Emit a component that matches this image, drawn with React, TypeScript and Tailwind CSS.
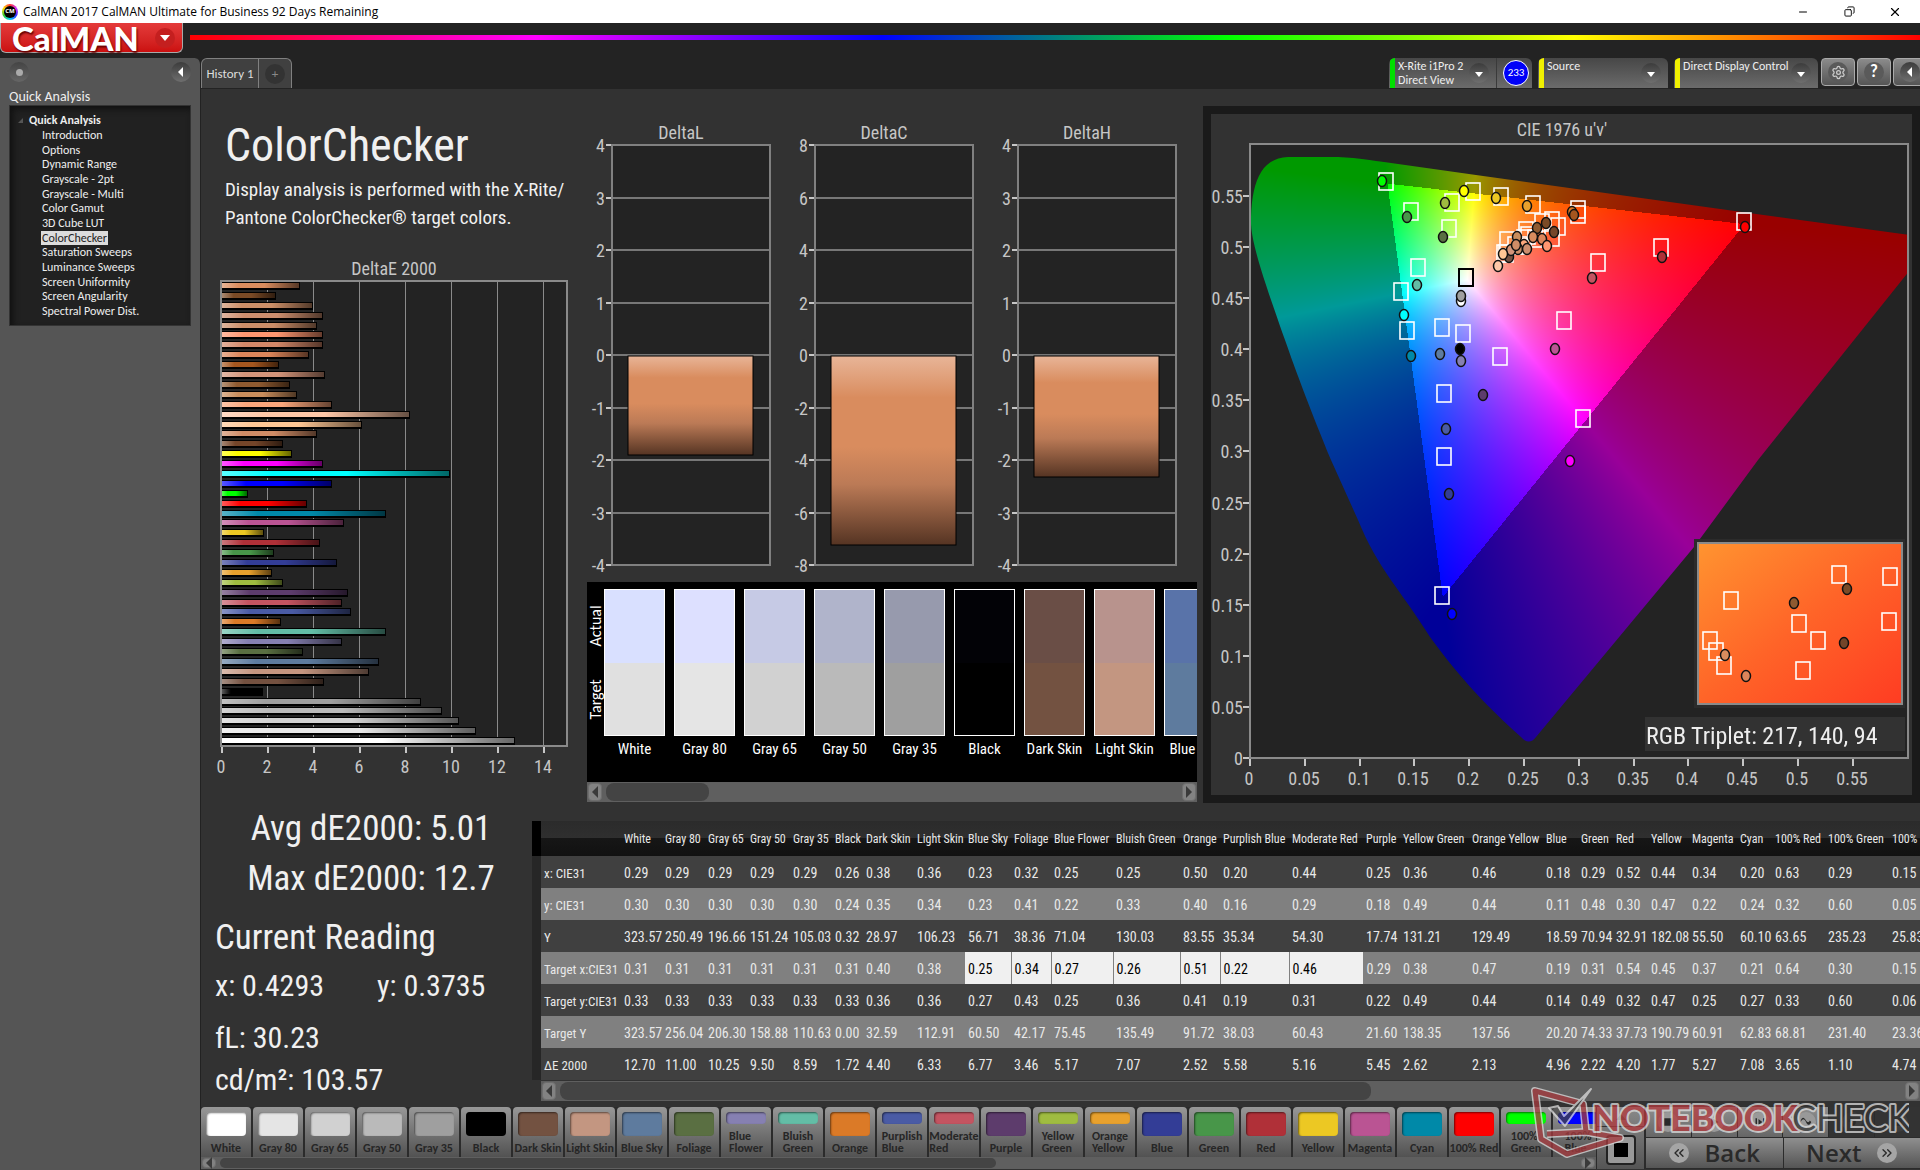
import { useEffect, useRef } from 'react';
import { Minus, X, Copy, ChevronsLeft, ChevronsRight, Settings } from 'lucide-react';

const COND = 'font-["Roboto_Condensed","Carlito","Liberation_Sans",sans-serif]';
const TEXT = 'font-["Carlito","Lato","Liberation_Sans",sans-serif]';

const treeItems = [
  'Introduction', 'Options', 'Dynamic Range', 'Grayscale - 2pt', 'Grayscale - Multi', 'Color Gamut', '3D Cube LUT',
  'ColorChecker', 'Saturation Sweeps', 'Luminance Sweeps', 'Screen Uniformity', 'Screen Angularity', 'Spectral Power Dist.',
];

// DeltaE 2000 per patch, listed top to bottom
const deltaE: [number, string][] = [
  [3.35, '#d98c5e'], [2.3, '#7a4a26'], [3.9, '#cc8f68'], [4.35, '#cd8e6e'], [4.1, '#cb8d68'], [4.35, '#ff9670'],
  [4.35, '#d38768'], [3.75, '#dc855a'], [2.45, '#a5561f'], [4.45, '#d4957a'], [2.9, '#8f5a30'], [3.2, '#c98d5c'],
  [4.75, '#fba77c'], [8.15, '#ffc8a8'], [6.05, '#ffc795'], [4.1, '#d08c66'], [2.6, '#744529'], [3.0, '#ffff00'],
  [4.35, '#ff00ff'], [9.85, '#00ffff'], [4.74, '#0000ff'], [1.1, '#00ff00'], [3.65, '#ff0000'], [7.08, '#0089a8'],
  [5.27, '#ba5493'], [1.77, '#ecc823'], [4.2, '#b03038'], [2.22, '#489649'], [4.96, '#333d96'], [2.13, '#e8a12d'],
  [2.62, '#9fbc40'], [5.45, '#5d3c6c'], [5.16, '#c45461'], [5.58, '#4a5ba5'], [2.52, '#db7a27'], [7.07, '#63bda6'],
  [5.17, '#8680b2'], [3.46, '#5a6f42'], [6.77, '#5e7c9f'], [6.33, '#c59680'], [4.4, '#745140'], [1.72, '#000000'],
  [8.59, '#9f9f9f'], [9.5, '#bababa'], [10.25, '#d2d2d2'], [11.0, '#e8e8e8'], [12.7, '#ffffff'],
];

const swatches = [
  { name: 'White', actual: '#d9e0ff', target: '#e0e0e0' },
  { name: 'Gray 80', actual: '#dde0ff', target: '#e5e5e5' },
  { name: 'Gray 65', actual: '#c6cae5', target: '#d1d1d1' },
  { name: 'Gray 50', actual: '#b0b4cb', target: '#bababa' },
  { name: 'Gray 35', actual: '#979aad', target: '#9f9f9f' },
  { name: 'Black', actual: '#020206', target: '#000000' },
  { name: 'Dark Skin', actual: '#6a4e46', target: '#735241' },
  { name: 'Light Skin', actual: '#b8938d', target: '#c39681' },
  { name: 'Blue Sky', actual: '#5973a9', target: '#5e7b9e' },
];

const columns: [string, number, string[]][] = [
  ['White', 41, ['0.29', '0.30', '323.57', '0.31', '0.33', '323.57', '12.70']],
  ['Gray 80', 43, ['0.29', '0.30', '250.49', '0.31', '0.33', '256.04', '11.00']],
  ['Gray 65', 42, ['0.29', '0.30', '196.66', '0.31', '0.33', '206.30', '10.25']],
  ['Gray 50', 43, ['0.29', '0.30', '151.24', '0.31', '0.33', '158.88', '9.50']],
  ['Gray 35', 42, ['0.29', '0.30', '105.03', '0.31', '0.33', '110.63', '8.59']],
  ['Black', 31, ['0.26', '0.24', '0.32', '0.31', '0.33', '0.00', '1.72']],
  ['Dark Skin', 51, ['0.38', '0.35', '28.97', '0.40', '0.36', '32.59', '4.40']],
  ['Light Skin', 51, ['0.36', '0.34', '106.23', '0.38', '0.36', '112.91', '6.33']],
  ['Blue Sky', 46, ['0.23', '0.23', '56.71', '0.25', '0.27', '60.50', '6.77']],
  ['Foliage', 40, ['0.32', '0.41', '38.36', '0.34', '0.43', '42.17', '3.46']],
  ['Blue Flower', 62, ['0.25', '0.22', '71.04', '0.27', '0.25', '75.45', '5.17']],
  ['Bluish Green', 67, ['0.25', '0.33', '130.03', '0.26', '0.36', '135.49', '7.07']],
  ['Orange', 40, ['0.50', '0.40', '83.55', '0.51', '0.41', '91.72', '2.52']],
  ['Purplish Blue', 69, ['0.20', '0.16', '35.34', '0.22', '0.19', '38.03', '5.58']],
  ['Moderate Red', 74, ['0.44', '0.29', '54.30', '0.46', '0.31', '60.43', '5.16']],
  ['Purple', 37, ['0.25', '0.18', '17.74', '0.29', '0.22', '21.60', '5.45']],
  ['Yellow Green', 69, ['0.36', '0.49', '131.21', '0.38', '0.49', '138.35', '2.62']],
  ['Orange Yellow', 74, ['0.46', '0.44', '129.49', '0.47', '0.44', '137.56', '2.13']],
  ['Blue', 35, ['0.18', '0.11', '18.59', '0.19', '0.14', '20.20', '4.96']],
  ['Green', 35, ['0.29', '0.48', '70.94', '0.31', '0.49', '74.33', '2.22']],
  ['Red', 35, ['0.52', '0.30', '32.91', '0.54', '0.32', '37.73', '4.20']],
  ['Yellow', 41, ['0.44', '0.47', '182.08', '0.45', '0.47', '190.79', '1.77']],
  ['Magenta', 48, ['0.34', '0.22', '55.50', '0.37', '0.25', '60.91', '5.27']],
  ['Cyan', 35, ['0.20', '0.24', '60.10', '0.21', '0.27', '62.83', '7.08']],
  ['100% Red', 53, ['0.63', '0.32', '63.65', '0.64', '0.33', '68.81', '3.65']],
  ['100% Green', 64, ['0.29', '0.60', '235.23', '0.30', '0.60', '231.40', '1.10']],
  ['100% Blue', 58, ['0.15', '0.05', '25.83', '0.15', '0.06', '23.36', '4.74']],
];
const rowLabels = ['x: CIE31', 'y: CIE31', 'Y', 'Target x:CIE31', 'Target y:CIE31', 'Target Y', 'ΔE 2000'];

const patches: [string, string][] = [
  ['White', '#ffffff'], ['Gray 80', '#e5e5e5'], ['Gray 65', '#d1d1d1'], ['Gray 50', '#bababa'], ['Gray 35', '#9f9f9f'],
  ['Black', '#000000'], ['Dark Skin', '#735241'], ['Light Skin', '#c39681'], ['Blue Sky', '#5e7b9e'], ['Foliage', '#5a6f42'],
  ['Blue\nFlower', '#8680b2'], ['Bluish\nGreen', '#63bda6'], ['Orange', '#db7a27'], ['Purplish\nBlue', '#4a5ba5'],
  ['Moderate\nRed', '#c45461'], ['Purple', '#5d3c6c'], ['Yellow\nGreen', '#9fbc40'], ['Orange\nYellow', '#e8a12d'],
  ['Blue', '#333d96'], ['Green', '#489649'], ['Red', '#b03038'], ['Yellow', '#ecc823'], ['Magenta', '#ba5493'],
  ['Cyan', '#0089a8'], ['100% Red', '#ff0000'], ['100%\nGreen', '#00ff00'], ['100%\nBlue', '#0000ff'],
];

// Target marker centres on the u'v' plane, in panel pixels
const targets: [number, number][] = [
  [175, 67], [262, 77], [290, 82], [241, 88], [322, 90], [200, 97], [238, 114], [367, 95], [367, 100], [533, 107],
  [450, 133], [387, 148], [207, 153], [190, 177], [196, 216], [231, 213], [252, 219], [353, 206], [289, 242],
  [233, 279], [372, 304], [233, 342], [231, 481], [347, 112], [341, 106], [331, 108], [315, 116], [296, 126],
  [341, 123], [324, 124], [317, 121], [313, 124], [309, 131], [304, 131], [293, 139], [295, 139],
];
const readings: [number, number, string][] = [
  [171, 67, '#00ff00'], [253, 77, '#ffff00'], [285, 84, '#ecc823'], [234, 89, '#9fbc40'], [316, 92, '#e8a12d'],
  [196, 103, '#489649'], [232, 123, '#5a6f42'], [361, 98, '#db7a27'], [363, 101, '#a5561f'], [335, 109, '#7a4a26'],
  [326, 114, '#8f5a30'], [343, 118, '#744529'], [313, 131, '#fba77c'], [306, 123, '#c98d5c'], [322, 123, '#d98c5e'],
  [331, 125, '#dc855a'], [336, 132, '#ff9670'], [307, 135, '#cc8f68'], [316, 135, '#cd8e6e'], [298, 143, '#745140'],
  [300, 136, '#d4957a'], [305, 131, '#d08c66'], [292, 140, '#ffc795'], [287, 152, '#ffc8a8'], [534, 113, '#ff0000'],
  [451, 143, '#b03038'], [381, 164, '#c45461'], [206, 171, '#63bda6'], [250, 187, '#ffffff'], [250, 182, '#9f9f9f'],
  [193, 201, '#00ffff'], [200, 242, '#0089a8'], [229, 240, '#5e7c9f'], [249, 235, '#000000'], [250, 247, '#8680b2'],
  [344, 235, '#ba5493'], [272, 281, '#5d3c6c'], [235, 315, '#4a5ba5'], [359, 347, '#ff00ff'], [238, 380, '#333d96'],
  [241, 500, '#0000ff'],
];
const insetTargets: [number, number][] = [
  [628, 460], [679, 462], [520, 486], [588, 509], [678, 507], [499, 526], [607, 526], [505, 537], [513, 551], [592, 556],
];
const insetReadings: [number, number, string][] = [
  [636, 475, '#7a4a26'], [583, 489, '#8f5a30'], [633, 529, '#744529'], [514, 541, '#d98c5e'], [535, 562, '#dc855a'],
];

const LOCUS =
  'M1 80 C1 40 10 14 38 13 L88 13 C110 14 125 17 134 18 L226 31 L499 69 L660 91 L660 126 L508 316 L444 403 L286 593 Q279 602 271 593 C240 565 212 537 180 493 C150 445 128 425 108 376 L81 316 C62 270 45 225 35 196 C22 158 2 105 1 80 Z';

function ArrowCap({ dir }: { dir: 'left' | 'right' }) {
  return (
    <button aria-label={`Scroll ${dir}`} className="w-[14px] shrink-0 rounded-sm border border-[#6e6e6e] bg-[#828282] flex items-center justify-center">
      <svg width="6" height="12" viewBox="0 0 6 12">
        <path d={dir === 'left' ? 'M6 0V12L0 6Z' : 'M0 0V12L6 6Z'} fill="#3a3a3a" />
      </svg>
    </button>
  );
}

function RoundArrow({ dir = 'down' }: { dir?: 'down' | 'left' }) {
  return (
    <span className="w-5 h-5 shrink-0 rounded-full bg-linear-to-b from-[#3c3c3c] to-[#6f6f6f] flex items-center justify-center">
      <svg width="10" height="10" viewBox="0 0 10 10">
        <path d={dir === 'down' ? 'M1 4H9L5 9Z' : 'M7 0V10L2 5Z'} fill="#fff" />
      </svg>
    </span>
  );
}

function TitleBar() {
  return (
    <div className="h-[23px] bg-white text-black flex items-center pl-[2px] font-['Open_Sans','Noto_Sans',sans-serif] text-[12px]">
      <span className="w-4 h-4 rounded-full bg-[conic-gradient(#f33,#c3f,#33f,#0cf,#3c3,#fd0,#f33)] p-[2px]">
        <span className="w-full h-full rounded-full bg-black text-white text-[6px] font-bold flex items-center justify-center">CM</span>
      </span>
      <span className="ml-[5px] grow">CalMAN 2017 CalMAN Ultimate for Business 92 Days Remaining</span>
      <button aria-label="Minimize" className="w-[46px] flex justify-center"><Minus size={12} strokeWidth={2} /></button>
      <button aria-label="Restore" className="w-[46px] flex justify-center"><Copy size={11} strokeWidth={2} className="-scale-x-100" /></button>
      <button aria-label="Close" className="w-[46px] flex justify-center mr-[2px]"><X size={14} strokeWidth={2} /></button>
    </div>
  );
}

function Header() {
  return (
    <header className="h-[35px] flex items-start bg-[#232323]">
      <button className="w-[183px] h-[30px] shrink-0 rounded-b-md border border-t-0 border-[#a9a9a9] bg-linear-to-b from-[#e43a3a] to-[#cb0f0f] flex items-center justify-between pl-[11px] pr-[7px]">
        <span className="font-['Lato',sans-serif] text-[33px] leading-[28px] font-black text-white [text-shadow:1px_2px_2px_#600]">CalMAN</span>
        <span className="w-5 h-5 rounded-full bg-[#c41f1f] flex items-center justify-center">
          <svg width="10" height="6" viewBox="0 0 10 6"><path d="M0 0H10L5 6Z" fill="#fff" /></svg>
        </span>
      </button>
      <div className="grow h-[5px] mt-3 ml-[7px] bg-[linear-gradient(to_right,#f00,#f0f,#00f,#0f0,#ff0,#f00)]" />
    </header>
  );
}

function Sidebar() {
  return (
    <aside className={`w-[201px] shrink-0 bg-[#555555] border-r border-[#222] rounded-tr-md px-[9px] ${TEXT} text-[#eee]`}>
      <div className="flex justify-between pt-1">
        <span className="w-5 h-5 rounded-full bg-linear-to-b from-[#444] to-[#666] flex items-center justify-center">
          <span className="w-[7px] h-[7px] rounded-full bg-[#aaa]" />
        </span>
        <button aria-label="Collapse sidebar"><RoundArrow dir="left" /></button>
      </div>
      <h2 className="mt-[7px] text-[14px] leading-4">Quick Analysis</h2>
      <nav className="h-[221px] bg-[#212121] border border-[#333] shadow-[inset_3px_3px_6px_#111] pt-[6px] text-[12px]">
        <div className="flex items-center font-bold text-[12px] leading-[16px] pl-2">
          <svg width="5" height="5" viewBox="0 0 5 5" className="mr-[6px]"><path d="M5 0V5H0Z" fill="#555" /></svg>
          Quick Analysis
        </div>
        <ul className="h-[190px] pl-[31px] flex flex-col justify-between">
          {treeItems.map((item) => (
            <li key={item} className="h-[14px] flex">
              <a
                href="#"
                className={item === 'ColorChecker' ? 'px-px leading-[14px] bg-[#dcdcdc] text-[#222]' : 'px-px leading-[14px]'}
              >
                {item}
              </a>
            </li>
          ))}
        </ul>
      </nav>
    </aside>
  );
}

function DeviceBox({ lines, stripe, children, width }: { lines: string[]; stripe: string; children?: React.ReactNode; width: string }) {
  return (
    <div className={`${width} h-[30px] rounded-t-md bg-linear-to-b from-[#474747] to-[#6b6b6b] flex overflow-hidden`}>
      <span className={`w-[5px] ml-px shrink-0 ${stripe}`} />
      <button className="grow flex items-center justify-between pl-[3px] pr-[7px] text-left text-[12px] leading-[14px] text-[#eee]">
        <span className="self-start pt-px whitespace-nowrap">
          {lines.map((l) => <span key={l} className="block">{l}</span>)}
        </span>
        <RoundArrow />
      </button>
      {children}
    </div>
  );
}

function TabBar() {
  const square = 'h-[28px] w-[34px] shrink-0 rounded border border-[#aaa] bg-linear-to-b from-[#8b8b8b] to-[#555] flex items-center justify-center';
  return (
    <div className={`h-[31px] bg-[#232323] flex items-start overflow-hidden ${TEXT}`}>
      <div className="h-[30px] flex rounded-t-md border border-b-0 border-[#808080] bg-[#404040]">
        <button className="w-[57px] text-[13px] text-[#ddd] border-r border-[#808080]">History 1</button>
        <button aria-label="Add tab" className="w-[32px] flex items-center justify-center">
          <span className="w-5 h-5 rounded-full bg-[#333] text-[#888] text-[13px] leading-[20px]">+</span>
        </button>
      </div>
      <div className="ml-auto flex gap-[6px]">
        <DeviceBox width="w-[143px]" stripe="bg-[#00e000]" lines={['X-Rite i1Pro 2', 'Direct View']}>
          <span className="w-[36px] shrink-0 border-l border-[#3a3a3a] flex items-center justify-end pr-[3px]">
            <span className="w-[26px] h-[26px] rounded-full border border-white bg-[#0000f8] text-white text-[11px] flex items-center justify-center">233</span>
          </span>
        </DeviceBox>
        <DeviceBox width="w-[130px]" stripe="bg-[#f0f000]" lines={['Source']} />
        <DeviceBox width="w-[144px]" stripe="bg-[#f0f000]" lines={['Direct Display Control']} />
      </div>
      <div className="flex gap-[2px] ml-[3px] -mr-[7px]">
        <button aria-label="Settings" className={square}>
          <span className="w-5 h-5 rounded-full bg-[#5a5a5a] flex items-center justify-center"><Settings size={15} color="#ccc" /></span>
        </button>
        <button aria-label="Help" className={square}>
          <span className="w-5 h-5 rounded-full bg-[#5a5a5a] text-white text-[17px] leading-[20px] font-bold">?</span>
        </button>
        <button aria-label="Collapse" className={square}><RoundArrow dir="left" /></button>
      </div>
    </div>
  );
}

function DeltaEChart() {
  const pitch = 465 / deltaE.length;
  return (
    <svg width="386" height="525" className={COND} role="img" aria-label="DeltaE 2000">
      <defs>
        <linearGradient id="gloss">
          <stop offset="0" stopColor="#fff" stopOpacity="0.35" />
          <stop offset="0.22" stopColor="#fff" stopOpacity="0" />
          <stop offset="0.55" stopColor="#000" stopOpacity="0" />
          <stop offset="1" stopColor="#000" stopOpacity="0.6" />
        </linearGradient>
      </defs>
      <text x="193" y="20" fontSize="18" fill="#c6c6c6" textAnchor="middle">DeltaE 2000</text>
      <rect x="21" y="26" width="345" height="465" fill="#232323" />
      {[0, 2, 4, 6, 8, 10, 12, 14].map((v) => (
        <g key={v}>
          <rect x={20 + v * 23} y="26" width="1" height="465" fill="#8a8a8a" />
          <rect x={20 + v * 23} y="491" width="2" height="7" fill="#c6c6c6" />
          <text x={20 + v * 23} y="518" fontSize="18" fill="#c6c6c6" textAnchor="middle">{v}</text>
        </g>
      ))}
      {deltaE.map(([value, color], i) => (
        <g key={i}>
          <rect x="21" y={Math.round(27 + i * pitch)} width={Math.round(value * 23) + 1} height="8" fill="#000" />
          <rect x="21" y={Math.round(28 + i * pitch)} width={Math.round(value * 23)} height="5" fill={color} />
          <rect x="21" y={Math.round(28 + i * pitch)} width={Math.round(value * 23)} height="5" fill="url(#gloss)" />
        </g>
      ))}
      <rect x="20" y="26" width="346" height="465" fill="none" stroke="#8a8a8a" strokeWidth="2" />
    </svg>
  );
}

function DeltaChart({ title, max, value }: { title: string; max: number; value: number }) {
  const height = Math.round((Math.abs(value) / max) * 210);
  return (
    <svg width="203" height="465" className={COND} role="img" aria-label={title}>
      <defs>
        <linearGradient id="copper" x2="0" y2="1">
          <stop offset="0" stopColor="#e8b598" />
          <stop offset="0.22" stopColor="#d98c5e" />
          <stop offset="0.48" stopColor="#d98c5e" />
          <stop offset="0.68" stopColor="#bb7a56" />
          <stop offset="1" stopColor="#553423" />
        </linearGradient>
      </defs>
      <text x="94" y="22" fontSize="18" fill="#c6c6c6" textAnchor="middle">{title}</text>
      <rect x="25" y="28" width="158" height="420" fill="#232323" />
      {[0, 1, 2, 3, 4, 5, 6, 7, 8].map((i) => {
        const y = Math.round(28 + i * 52.5);
        return (
          <g key={i}>
            <rect x="25" y={y - 1} width="158" height="2" fill="#777" />
            <rect x="19" y={y - 1} width="6" height="2" fill="#c6c6c6" />
            <text x="18" y={y + 7} fontSize="18" fill="#c6c6c6" textAnchor="end">{max - (i * max) / 4}</text>
          </g>
        );
      })}
      <rect x="25" y="28" width="158" height="420" fill="none" stroke="#808080" strokeWidth="2" />
      <rect x="41" y="239" width="125" height={height} fill="url(#copper)" stroke="#000" />
    </svg>
  );
}

function ScrollBar({ thumb, height = 'h-5' }: { thumb: string; height?: string }) {
  return (
    <div className={`${height} bg-[#5f5f5f] flex gap-1 p-px`}>
      <ArrowCap dir="left" />
      <div className="grow flex"><div className={`${thumb} rounded-lg bg-[#444]`} /></div>
      <ArrowCap dir="right" />
    </div>
  );
}

function Comparison() {
  const side = '[writing-mode:vertical-rl] rotate-180 text-center flex-1';
  return (
    <div>
      <div className={`h-[200px] bg-black text-white flex pt-[7px] overflow-hidden ${COND}`}>
        <div className={`w-[17px] h-[147px] shrink-0 flex flex-col text-[16px] leading-[17px] ${TEXT}`}>
          <span className={side}>Actual</span>
          <span className={side}>Target</span>
        </div>
        <div className="flex gap-[9px]">
          {swatches.map((s) => (
            <div key={s.name} className="w-[61px] shrink-0 text-center">
              <div className="h-[147px] border border-white flex flex-col">
                <div className="flex-1" style={{ background: s.actual }} />
                <div className="flex-1" style={{ background: s.target }} />
              </div>
              <div className="text-[15px] leading-[26px] whitespace-nowrap">{s.name}</div>
            </div>
          ))}
        </div>
      </div>
      <ScrollBar thumb="w-[103px]" />
    </div>
  );
}

// Fills the horseshoe with the brightest RGB colour of each chromaticity
function paintGamut(canvas: HTMLCanvasElement) {
  const ctx = canvas.getContext('2d');
  if (!ctx) return;
  const { width, height } = canvas;
  const image = ctx.createImageData(width, height);
  for (let py = 0; py < height; py++) {
    for (let px = 0; px < width; px++) {
      const u = px / 1096;
      const v = Math.max((height - py) / 1022, 0.001);
      const X = (9 * u) / (4 * v);
      const Z = (12 - 3 * u - 20 * v) / (4 * v);
      const rgb = [
        3.2406 * X - 1.5372 - 0.4986 * Z,
        -0.9689 * X + 1.8758 + 0.0415 * Z,
        0.0557 * X - 0.204 + 1.057 * Z,
      ];
      const dim = Math.min(...rgb) < 0 ? 0.6 : 1;
      const top = Math.max(...rgb);
      const at = (py * width + px) * 4;
      rgb.forEach((c, i) => {
        image.data[at + i] = 255 * dim * Math.pow(Math.max(c, 0) / top, 0.9);
      });
      image.data[at + 3] = 255;
    }
  }
  ctx.putImageData(image, 0, 0);
  ctx.globalCompositeOperation = 'destination-in';
  ctx.fill(new Path2D(LOCUS));
  ctx.globalCompositeOperation = 'source-over';
}

function Markers({ squares, dots }: { squares: [number, number][]; dots: [number, number, string][] }) {
  return (
    <>
      {squares.map(([x, y], i) => (
        <rect key={i} x={x - 7} y={y - 8} width="14" height="17" fill="none" stroke="#fff" strokeWidth="1.6" />
      ))}
      {dots.map(([x, y, color], i) => (
        <ellipse key={i} cx={x} cy={y} rx="4.5" ry="5.5" fill={color} stroke="#111" strokeWidth="1.5" />
      ))}
    </>
  );
}

function CieChart() {
  const canvas = useRef<HTMLCanvasElement>(null);
  useEffect(() => {
    if (canvas.current) paintGamut(canvas.current);
  }, []);
  const ticks = [0, 0.05, 0.1, 0.15, 0.2, 0.25, 0.3, 0.35, 0.4, 0.45, 0.5, 0.55];
  return (
    <div className="mt-[17px] border-8 border-[#1a1a1a] bg-[#323232] shrink-0">
      <div className="relative">
        <svg width="701" height="681" className={`block ${COND}`}>
          <rect x="39" y="30" width="658" height="614" fill="#232323" />
          <text x="351" y="22" fontSize="18" fill="#c6c6c6" textAnchor="middle">CIE 1976 u'v'</text>
          {ticks.map((t) => (
            <g key={t}>
              <rect x={Math.round(38 + t * 1096)} y="645" width="2" height="7" fill="#c6c6c6" />
              <text x={Math.round(38 + t * 1096)} y="671" fontSize="18" fill="#c6c6c6" textAnchor="middle">{t}</text>
              <rect x="32" y={Math.round(643 - t * 1022)} width="6" height="2" fill="#c6c6c6" />
              <text x="32" y={Math.round(651 - t * 1022)} fontSize="18" fill="#c6c6c6" textAnchor="end">{t}</text>
            </g>
          ))}
        </svg>
        <canvas ref={canvas} width={658} height={614} className="absolute left-[39px] top-[30px]" />
        <svg width="701" height="681" className={`absolute inset-0 ${COND}`}>
          <defs>
            <linearGradient id="zoomed" x2="1" y2="1">
              <stop offset="0" stopColor="#ff9430" />
              <stop offset="0.5" stopColor="#ff6428" />
              <stop offset="1" stopColor="#ff3c22" />
            </linearGradient>
          </defs>
          <rect x="39" y="30" width="658" height="614" fill="none" stroke="#8a8a8a" strokeWidth="2" />
          <Markers squares={targets} dots={readings} />
          <rect x="248" y="155" width="14" height="17" fill="none" stroke="#000" strokeWidth="2" />
          <rect x="483" y="425" width="211" height="169" fill="#2b2b2b" />
          <rect x="487" y="429" width="204" height="161" fill="url(#zoomed)" stroke="#8a8a8a" strokeWidth="2" />
          <Markers squares={insetTargets} dots={insetReadings} />
          <rect x="434" y="603" width="260" height="34" fill="#323232" />
          <text x="435" y="630" fontSize="24" fill="#eee">RGB Triplet: 217, 140, 94</text>
        </svg>
      </div>
    </div>
  );
}

function Stats() {
  return (
    <div className={`w-[331px] shrink-0 pt-px pl-[14px] text-[#f0f0f0] text-[30px] leading-[44px] whitespace-nowrap ${COND}`}>
      <div className="w-[312px] text-center text-[35px] leading-[50px]">
        <p>Avg dE2000: 5.01</p>
        <p>Max dE2000: 12.7</p>
      </div>
      <h2 className="mt-3 text-[35px]">Current Reading</h2>
      <p className="mt-1 flex">
        <span className="w-[162px]">x: 0.4293</span>
        <span>y: 0.3735</span>
      </p>
      <p className="mt-2">fL: 30.23</p>
      <p className="leading-[40px]">cd/m²: 103.57</p>
    </div>
  );
}

function DataTable() {
  return (
    <div className="grow min-w-0 mt-[18px] overflow-hidden">
      <table className={`table-fixed w-[1415px] border-collapse text-left text-[14px] text-[#e8e8e8] whitespace-nowrap ${COND}`}>
        <colgroup>
          <col className="w-[9px]" />
          <col className="w-[80px]" />
          {columns.map(([name, width]) => <col key={name} style={{ width }} />)}
        </colgroup>
        <thead>
          <tr className="h-[35px] text-[12px] bg-[linear-gradient(#2b2b2b,#2f2f2f_50%,#161616_50%,#111)]">
            <td className="bg-black" />
            <td />
            {columns.map(([name]) => <th key={name} scope="col" className="p-0 pl-[3px] font-normal">{name}</th>)}
          </tr>
        </thead>
        <tbody>
          {rowLabels.map((label, r) => (
            <tr key={label} className={r % 2 ? 'h-8 bg-[#808080]' : 'h-8 bg-[#404040]'}>
              <td className="bg-[#262626]" />
              <th scope="row" className="p-0 pl-[3px] pt-[3px] text-[13px] font-normal">{label}</th>
              {columns.map(([name, , values], c) => (
                <td
                  key={name}
                  className={r === 3 && c > 7 && c < 15 ? 'p-0 pl-[3px] pt-[3px] bg-[#f0f0f0] text-black border-r border-[#808080]' : 'p-0 pl-[3px] pt-[3px]'}
                >
                  {values[r]}
                </td>
              ))}
            </tr>
          ))}
        </tbody>
      </table>
      <div className="pl-[9px] mt-px"><ScrollBar thumb="w-[811px]" /></div>
    </div>
  );
}

function PatchBar() {
  return (
    <div className="grow min-w-0 overflow-hidden">
      <div className="flex gap-[2px] bg-[#2b2b2b]">
        {patches.map(([name, color]) => (
          <button
            key={name}
            className={`w-[50px] h-[50px] shrink-0 rounded-t bg-linear-to-b from-[#989898] to-[#525252] flex flex-col items-center pt-[5px] pb-[3px] font-bold text-[12px] leading-[12px] text-[#262626] ${TEXT}`}
          >
            <span
              className={name.includes('\n') ? 'w-10 h-3 rounded-sm shadow-[inset_1px_1px_2px_#0008]' : 'w-10 h-6 rounded-sm shadow-[inset_1px_1px_2px_#0008]'}
              style={{ background: color }}
            />
            <span className="mt-auto whitespace-pre text-left">{name}</span>
          </button>
        ))}
      </div>
      <ScrollBar thumb="w-[776px]" height="h-3" />
    </div>
  );
}

function Transport() {
  const media = [
    'M3 3H13V13H3Z', 'M4 2L14 8L4 14Z', 'M2 3H4V13H2ZM12 3H14V13H12ZM6 4L11 8L6 12Z',
    'M1 8C3 3 6 3 8 8C10 13 13 13 15 8L13 6C12 9 10 9 8 6C5 1 3 1 1 6Z', 'M3 8A5 5 0 1 1 8 13L8 10A2 2 0 1 0 6 8Z', 'M3 3H13V13H3Z',
  ];
  const wide = 'h-[30px] flex-1 bg-linear-to-b from-[#8f8f8f] to-[#555] flex items-center justify-center gap-4 text-[24px] text-[#2a2a2a]';
  return (
    <div className="flex shrink-0 gap-[2px] pl-px bg-[#2b2b2b]">
      <div className="w-[47px] bg-linear-to-b from-[#8a8a8a] to-[#555] flex flex-col items-center justify-between pb-[4px]">
        <button aria-label="Expand" className="w-full h-5 border-b border-[#333] flex items-center justify-center">
          <svg width="10" height="6" viewBox="0 0 10 6"><path d="M0 6H10L5 0Z" fill="#444" /></svg>
        </button>
        <button aria-label="Pattern window" className="w-[30px] h-[30px] rounded border-2 border-[#222] bg-[#999] flex items-center justify-center">
          <span className="w-[14px] h-[14px] bg-black" />
        </button>
      </div>
      <div className="w-[274px]">
        <div className="flex h-[30px] gap-px">
          {media.map((d, i) => (
            <button
              key={i}
              aria-label={`Transport ${i + 1}`}
              className={i > 3 ? 'flex-1 bg-[#333] flex items-center justify-center' : 'flex-1 bg-linear-to-b from-[#8f8f8f] to-[#666] flex items-center justify-center'}
            >
              <span className={i > 3 ? 'w-5 h-5 rounded-full bg-[#3d3d3d] flex items-center justify-center' : 'w-5 h-5 rounded-full bg-[#999] flex items-center justify-center'}>
                <svg width="12" height="12" viewBox="0 0 16 16"><path d={d} fill="#2a2a2a" /></svg>
              </span>
            </button>
          ))}
        </div>
        <div className="mt-px flex gap-px font-['Open_Sans','Noto_Sans',sans-serif] font-semibold">
          <button className={wide}>
            <span className="w-5 h-5 rounded-full bg-[#a5a5a5] flex items-center justify-center"><ChevronsLeft size={16} /></span>
            Back
          </button>
          <button className={wide}>
            Next
            <span className="w-5 h-5 rounded-full bg-[#a5a5a5] flex items-center justify-center"><ChevronsRight size={16} /></span>
          </button>
        </div>
      </div>
    </div>
  );
}

function Watermark() {
  return (
    <svg width="390" height="90" className="absolute right-[11px] bottom-[8px] opacity-75 pointer-events-none" viewBox="0 0 390 90">
      <g fill="none" strokeLinejoin="round">
        <path d="M16 19L64 32L67 60L101 66L48 82L22 67ZM28 62L67 60" stroke="#ddd" strokeWidth="8" />
        <path d="M16 19L64 32L67 60L101 66L48 82L22 67ZM28 62L67 60" stroke="#a63a3e" strokeWidth="5" />
        <path d="M30 36L39 34L45 44L72 17L46 54Z" fill="#444" stroke="#ddd" strokeWidth="2" />
      </g>
      <g className="font-['Lato',sans-serif]" fontSize="36" stroke="#ddd" strokeWidth="4" strokeLinejoin="round" paintOrder="stroke">
        <text x="73" y="59" fontWeight="900" fill="#b3393d">NOTEBOOK</text>
        <text x="273" y="59" fontWeight="400" fill="#333">CHECK</text>
      </g>
    </svg>
  );
}

export default function App() {
  return (
    <div className="relative min-h-screen flex flex-col overflow-hidden bg-[#232323]">
      <TitleBar />
      <Header />
      <div className="grow flex">
        <Sidebar />
        <main className="grow min-w-0 flex flex-col bg-[#323232]">
          <TabBar />
          <div className="flex">
            <div className={`w-[386px] shrink-0 pt-[28px] text-[#f0f0f0] ${COND}`}>
              <h1 className="pl-6 text-[46px] leading-[56px]">ColorChecker</h1>
              <p className="pl-6 mt-[3px] mb-[23px] text-[19px] leading-[28px]">
                Display analysis is performed with the X-Rite/<br />Pantone ColorChecker® target colors.
              </p>
              <DeltaEChart />
            </div>
            <div className="grow min-w-0 pt-[28px] mr-[6px]">
              <div className="flex">
                <DeltaChart title="DeltaL" max={4} value={-1.88} />
                <DeltaChart title="DeltaC" max={8} value={-7.2} />
                <DeltaChart title="DeltaH" max={4} value={-2.3} />
              </div>
              <Comparison />
            </div>
            <CieChart />
          </div>
          <div className="flex">
            <Stats />
            <DataTable />
          </div>
          <div className="flex mt-auto pb-px">
            <PatchBar />
            <Transport />
          </div>
        </main>
      </div>
      <Watermark />
    </div>
  );
}
